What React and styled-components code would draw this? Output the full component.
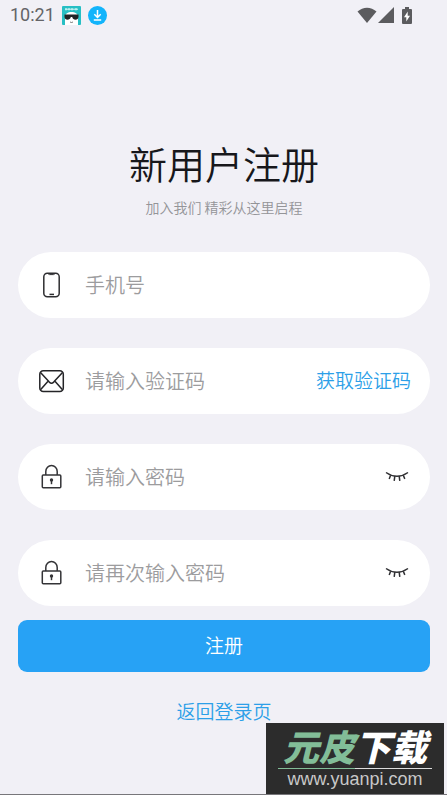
import React, { useState } from "react";
import styled, { createGlobalStyle } from "styled-components";

const GlobalStyle = createGlobalStyle`
    * {
        box-sizing: border-box;
    }
    body {
        margin: 0;
        background: #f1f0f6;
        font-family: "Noto Sans CJK SC", sans-serif;
        font-weight: 350;
    }
    button,
    input {
        font-family: inherit;
        font-weight: inherit;
    }
`;

const Page = styled.div`
    position: relative;
    min-height: 100vh;
    display: flex;
    flex-direction: column;
    border-bottom: 1px solid #77767a;
`;

const StatusBar = styled.header`
    height: 30px;
    padding: 0 35px 0 10px;
    display: flex;
    align-items: center;
    justify-content: space-between;
    color: #646467;
    font: 400 18px/30px Roboto, sans-serif;
`;

const StatusGroup = styled.div`
    display: flex;
    align-items: center;
    gap: ${(props) => props.$gap}px;
    svg {
        display: block;
    }
`;

const Main = styled.main`
    padding: 107px 17px 0 18px;
    display: flex;
    flex-direction: column;
`;

const Title = styled.h1`
    margin: 0;
    color: #17171b;
    font-size: 38px;
    font-weight: inherit;
    line-height: 52px;
    text-align: center;
`;

const Subtitle = styled.p`
    margin: 8px 0 35px;
    color: #949498;
    font-size: 14px;
    line-height: 20px;
    text-align: center;
`;

const Form = styled.form`
    display: flex;
    flex-direction: column;
`;

const Fields = styled.div`
    display: flex;
    flex-direction: column;
    gap: 30px;
`;

const Field = styled.div`
    height: 66px;
    padding: 0 19px 0 20px;
    display: flex;
    align-items: center;
    border-radius: 33px;
    background: #fff;
`;

const FieldIcon = styled.label`
    width: 28px;
    margin-right: 19px;
    flex: none;
    svg {
        display: block;
    }
`;

const TextInput = styled.input`
    flex: 1;
    min-width: 0;
    height: 40px;
    padding: 0 0 2px;
    border: 0;
    outline: 0;
    background: transparent;
    color: #222;
    font-size: 20px;
    &::placeholder {
        color: #9c9c9e;
        opacity: 1;
    }
`;

const CodeButton = styled.button`
    padding: 0 0 2px;
    border: 0;
    background: none;
    color: #2c9fe8;
    font-size: 19px;
    line-height: 28px;
`;

const EyeButton = styled.button`
    padding: 0;
    margin-right: 2px;
    border: 0;
    background: none;
    svg {
        display: block;
    }
`;

const SubmitButton = styled.button`
    height: 52px;
    margin-top: 14px;
    padding: 0 0 3px;
    border: 0;
    border-radius: 9px;
    background: #27a2f5;
    color: #fff;
    font-size: 19px;
`;

const BackLink = styled.a`
    align-self: center;
    margin-top: 25px;
    color: #2c9fe8;
    font-size: 19px;
    line-height: 28px;
    text-decoration: none;
`;

const Watermark = styled.aside`
    position: absolute;
    right: 3px;
    bottom: 0;
    width: 178px;
    height: 71px;
    padding: 5px 12px 0;
    background: #2c2c2c;
    text-align: center;
`;

const WatermarkName = styled.div`
    height: 40px;
    color: #fff;
    font-size: 36px;
    font-style: italic;
    font-weight: 900;
    line-height: 34px;
    white-space: nowrap;
    span {
        color: #82bd98;
    }
`;

const WatermarkRule = styled.div`
    height: 1px;
    background: linear-gradient(90deg, #82bd98 50%, #ddd 50%);
`;

const WatermarkUrl = styled.div`
    color: #c8c8c8;
    font: 18px/20px "Liberation Sans", sans-serif;
`;

function AppBadge() {
    return (
        <svg width="19" height="19" viewBox="0 0 19 19">
            <rect width="19" height="19" rx="1" fill="#27bfc4" />
            <path d="M3 3.2h13M4 2v2.4M7 2v2.4M10 2v2.4M14 2v2.4" stroke="#d9f7f5" strokeWidth="1" />
            <path d="M3 19V11c0-3.500 3-5 6.500-5s6.500 1.500 6.500 5v8z" fill="#fff" />
            <path d="M2.500 8.500h14v2.200c0 2-1.400 3-3 3s-2.900-1-3.300-2.700H8.800c-.4 1.700-1.700 2.700-3.300 2.700s-3-1-3-3z" fill="#202426" />
            <path d="M8 16q1.500 1 3 0" fill="none" stroke="#555" strokeWidth=".8" />
        </svg>
    );
}

function DownloadBadge() {
    return (
        <svg width="19" height="19" viewBox="0 0 19 19">
            <circle cx="9.5" cy="9.5" r="9.5" fill="#12b4fb" />
            <path d="M9.500 4v7M6.300 8.300l3.200 3.200 3.200-3.200M5.800 14h7.400" fill="none" stroke="#fff" strokeWidth="1.500" />
        </svg>
    );
}

function WifiIcon() {
    return (
        <svg width="20" height="16" viewBox="0 0 20 16">
            <path d="M.5 4.500C6-.6 14-.6 19.500 4.500L10 16z" fill="#5b5b5e" />
        </svg>
    );
}

function SignalIcon() {
    return (
        <svg width="16" height="16" viewBox="0 0 16 16">
            <path d="M16 0v16H0z" fill="#5b5b5e" />
        </svg>
    );
}

function BatteryIcon() {
    return (
        <svg width="10" height="17" viewBox="0 0 10 17">
            <path d="M3 0h4v2h2q1 0 1 1v13q0 1-1 1H1q-1 0-1-1V3q0-1 1-1h2z" fill="#5b5b5e" />
            <path d="M5.700 4.500L2 10.300h2.300v4.200L8 8.800H5.700z" fill="#fff" />
        </svg>
    );
}

function PhoneIcon() {
    return (
        <svg width="28" height="28" viewBox="0 0 28 28" fill="none" stroke="#2e2e31" strokeWidth="1.500">
            <rect x="5.800" y="2.200" width="15.400" height="23.500" rx="3.500" />
            <path d="M10 2.600q.5 1 1.500 1h4q1 0 1.500-1" strokeWidth="1" />
            <path d="M11.500 23.400h4.500" />
        </svg>
    );
}

function MailIcon() {
    return (
        <svg width="28" height="28" viewBox="0 0 28 28" fill="none" stroke="#242427" strokeWidth="1.500">
            <rect x="1.800" y="3.800" width="23.500" height="20.700" rx="3.500" />
            <path d="M2.500 5.500l8.800 9.600q2.200 2.200 4.400 0l8.800-9.600M2.500 22.800l7.300-8.200M24.500 22.800l-7.300-8.200" />
        </svg>
    );
}

function LockIcon() {
    return (
        <svg width="28" height="28" viewBox="0 0 28 28" fill="none" stroke="#343437" strokeWidth="1.500">
            <rect x="4.300" y="12" width="18.500" height="12.800" rx="1" />
            <path d="M7.800 12V8.500a5.700 5.900 0 0 1 11.400 0V12" />
            <circle cx="13.500" cy="17" r="1.700" fill="#343437" stroke="none" />
            <path d="M13.500 17v4.200" />
        </svg>
    );
}

function ClosedEyeIcon() {
    return (
        <svg width="24" height="12" viewBox="0 0 24 12" fill="none" stroke="#303033" strokeWidth="1.500">
            <path d="M1 1.500q11 7.600 22 0" />
            <path d="M5.600 4.200L4.200 7.900M9.800 5.200L9.200 9.800M14.200 5.200l.6 4.600M18.300 4.200l1.500 3.700" />
        </svg>
    );
}

function PasswordField({ id, placeholder }) {
    const [visible, setVisible] = useState(false);

    return (
        <Field>
            <FieldIcon htmlFor={id}>
                <LockIcon />
            </FieldIcon>
            <TextInput id={id} type={visible ? "text" : "password"} placeholder={placeholder} />
            <EyeButton type="button" aria-label="显示密码" onClick={() => setVisible(!visible)}>
                <ClosedEyeIcon />
            </EyeButton>
        </Field>
    );
}

export default function App() {
    return (
        <Page>
            <GlobalStyle />
            <StatusBar>
                <StatusGroup $gap={7}>
                    <span>10:21</span>
                    <AppBadge />
                    <DownloadBadge />
                </StatusGroup>
                <StatusGroup $gap={8}>
                    <StatusGroup $gap={1}>
                        <WifiIcon />
                        <SignalIcon />
                    </StatusGroup>
                    <BatteryIcon />
                </StatusGroup>
            </StatusBar>
            <Main>
                <Title>新用户注册</Title>
                <Subtitle>加入我们 精彩从这里启程</Subtitle>
                <Form onSubmit={(e) => e.preventDefault()}>
                    <Fields>
                        <Field>
                            <FieldIcon htmlFor="phone">
                                <PhoneIcon />
                            </FieldIcon>
                            <TextInput id="phone" type="tel" placeholder="手机号" />
                        </Field>
                        <Field>
                            <FieldIcon htmlFor="code">
                                <MailIcon />
                            </FieldIcon>
                            <TextInput id="code" type="text" placeholder="请输入验证码" />
                            <CodeButton type="button">获取验证码</CodeButton>
                        </Field>
                        <PasswordField id="password" placeholder="请输入密码" />
                        <PasswordField id="confirm" placeholder="请再次输入密码" />
                    </Fields>
                    <SubmitButton type="submit">注册</SubmitButton>
                    <BackLink href="#login">返回登录页</BackLink>
                </Form>
            </Main>
            <Watermark>
                <WatermarkName>
                    <span>元皮</span>下载
                </WatermarkName>
                <WatermarkRule />
                <WatermarkUrl>www.yuanpi.com</WatermarkUrl>
            </Watermark>
        </Page>
    );
}
